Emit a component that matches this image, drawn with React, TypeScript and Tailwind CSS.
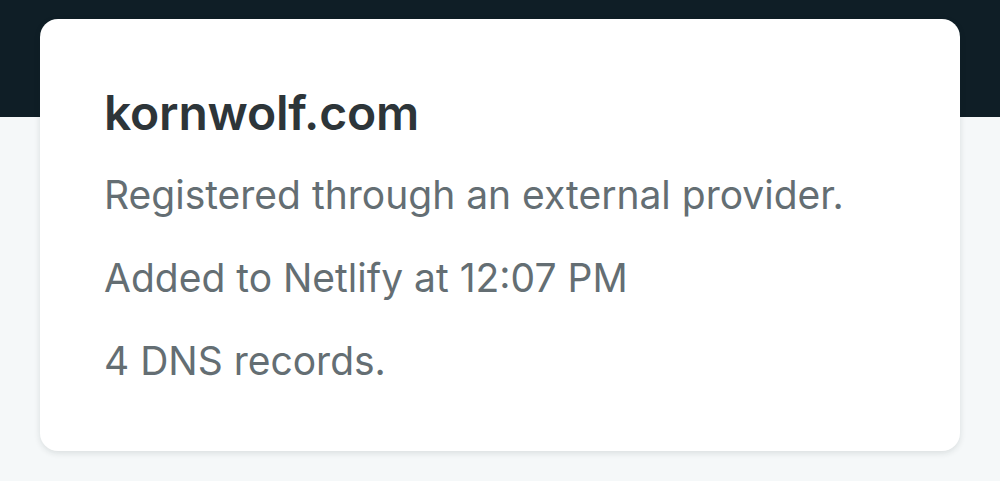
import React from 'react';

export default function App() {
  return (
    <div
      className="w-[1000px] h-[481px] overflow-hidden bg-[linear-gradient(to_bottom,#0f1e26_117px,#f5f8f9_117px)] pt-[19px] px-[40px]"
      style={{ fontFamily: 'Inter, "Noto Sans", sans-serif' }}
    >
      <div className="h-[432px] rounded-[18px] bg-white shadow-[0_2px_6px_rgba(14,30,37,0.12)] pl-[64px] pt-[64px]">
        <h1 className="text-[48px] leading-[60px] font-semibold text-[#2d3539] tracking-[-0.2px]">kornwolf.com</h1>
        <p className="mt-[10px] text-[39px] leading-[83px] text-[#646e73]">Registered through an external provider.</p>
        <p className="text-[39px] leading-[83px] text-[#646e73]">Added to Netlify at 12:07 PM</p>
        <p className="text-[39px] leading-[83px] text-[#646e73]">4 DNS records.</p>
      </div>
    </div>
  );
}
